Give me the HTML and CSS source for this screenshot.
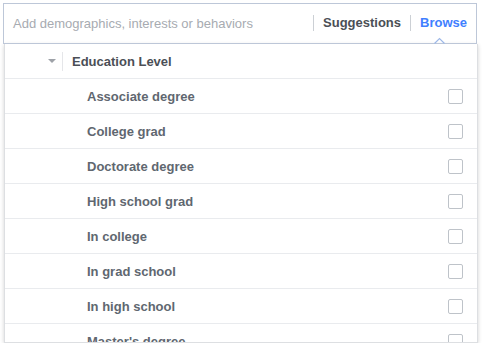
FILE: index.html
```html
<!DOCTYPE html>
<html>
<head>
<meta charset="utf-8">
<link rel="stylesheet" href="styles.css">
</head>
<body>
<div class="wrap">
  <div class="search">
    <span class="placeholder">Add demographics, interests or behaviors</span>
    <span class="tabs">
      <span class="sep"></span>
      <span class="tab">Suggestions</span>
      <span class="sep"></span>
      <span class="tab active">Browse</span>
    </span>
    <svg class="notch" width="11" height="7" viewBox="0 0 11 7"><path d="M0.5 6.5 L5.5 1.5 L10.5 6.5" fill="none" stroke="#9db8e8" stroke-width="1.2"/></svg>
  </div>
  <div class="dropdown">
    <div class="header">
      <span class="tri"></span>
      <span class="vline"></span>
      <span class="htitle">Education Level</span>
    </div>
    <div class="row"><span class="label">Associate degree</span><span class="check"></span></div>
    <div class="row"><span class="label">College grad</span><span class="check"></span></div>
    <div class="row"><span class="label">Doctorate degree</span><span class="check"></span></div>
    <div class="row"><span class="label">High school grad</span><span class="check"></span></div>
    <div class="row"><span class="label">In college</span><span class="check"></span></div>
    <div class="row"><span class="label">In grad school</span><span class="check"></span></div>
    <div class="row"><span class="label">In high school</span><span class="check"></span></div>
    <div class="row"><span class="label">Master's degree</span><span class="check"></span></div>
  </div>
</div>
</body>
</html>
```

FILE: styles.css
```css
html, body {
  margin: 0;
  padding: 0;
  background: #fff;
  font-family: "Liberation Sans", Arial, sans-serif;
  font-size: 13px;
}
.wrap {
  padding: 3px 0 0 3px;
  width: 474px;
}
.search {
  position: relative;
  box-sizing: border-box;
  height: 41px;
  border: 1px solid #bdc7d8;
  display: flex;
  align-items: center;
  padding: 0 9px 0 9px;
  justify-content: space-between;
}
.placeholder {
  color: #a7abb1;
  font-size: 13px;
  margin-top: -1px;
}
.tabs {
  display: flex;
  align-items: center;
  margin-top: -2px;
}
.sep {
  width: 1px;
  height: 16px;
  background: #ccd0d5;
}
.tab {
  font-weight: bold;
  color: #4b4f56;
  padding: 0 9px 0 9px;
}
.tab.active {
  color: #4080ff;
  padding-right: 0;
}
.notch {
  position: absolute;
  left: 430px;
  bottom: -1px;
  z-index: 2;
}
.dropdown {
  margin-left: 1px;
  width: 474px;
  box-sizing: border-box;
  height: 299px;
  overflow: hidden;
  border: 1px solid #dddfe2;
  border-top: none;
  box-shadow: 0 1px 4px rgba(0,0,0,0.18);
  background: #fff;
}
.header {
  height: 35px;
  box-sizing: border-box;
  border-bottom: 1px solid #e9ebee;
  display: flex;
  align-items: center;
}
.tri {
  width: 0;
  height: 0;
  border-left: 4px solid transparent;
  border-right: 4px solid transparent;
  border-top: 4px solid #9ea2a8;
  margin-left: 43px;
}
.vline {
  width: 1px;
  height: 19px;
  background: #e5e6e9;
  margin-left: 6px;
}
.htitle {
  margin-left: 9px;
  font-weight: bold;
  color: #4b4f56;
}
.row {
  height: 35px;
  box-sizing: border-box;
  border-bottom: 1px solid #e9ebee;
  display: flex;
  align-items: center;
  justify-content: space-between;
  padding: 0 14px 0 82px;
}
.label {
  font-weight: bold;
  color: #606770;
}
.check {
  width: 15px;
  height: 15px;
  box-sizing: border-box;
  border: 1px solid #bec3c9;
  border-radius: 2px;
  background: #fff;
}
```
